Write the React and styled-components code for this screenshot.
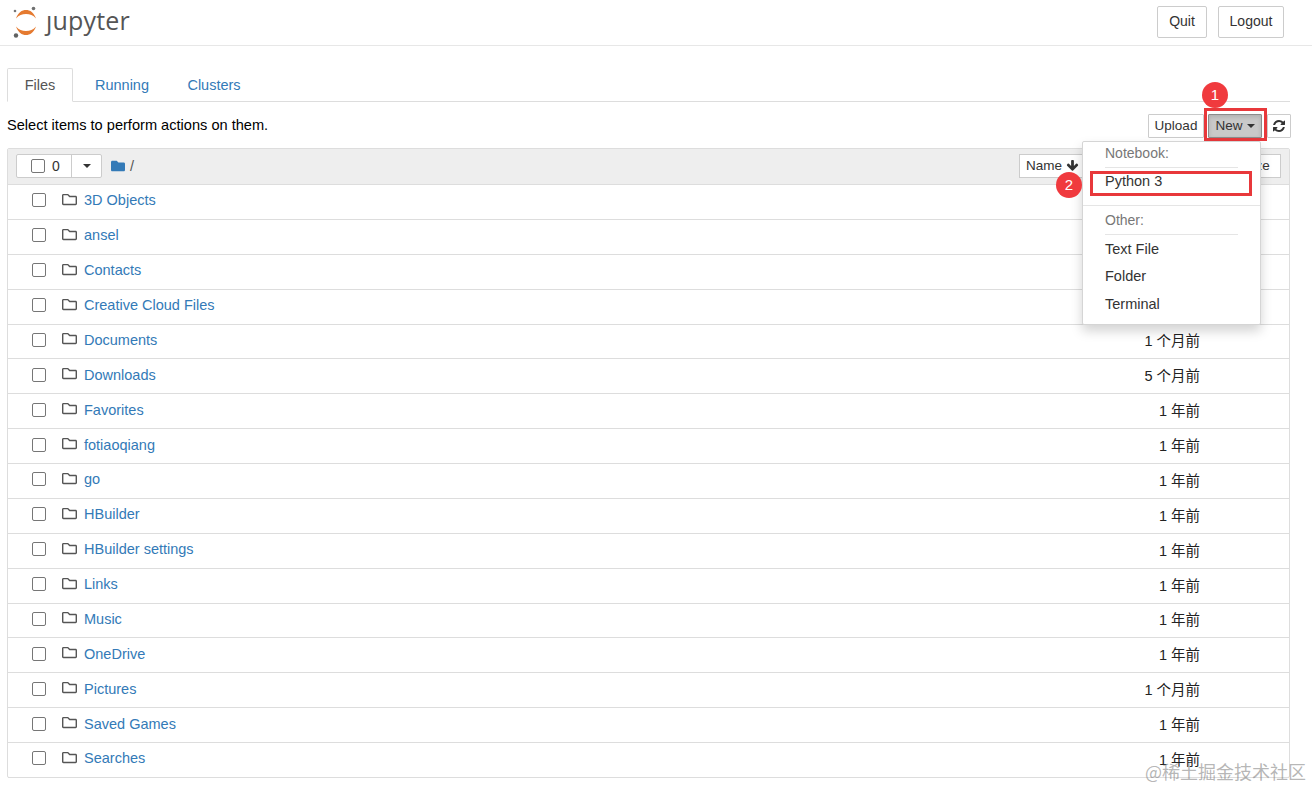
import React from 'react';
import styled, { createGlobalStyle } from 'styled-components';
import { FaRegFolder, FaFolder, FaArrowDown } from 'react-icons/fa';

const GlobalStyle = createGlobalStyle`
    html, body {
        margin: 0;
        padding: 0;
        background: #fff;
        font-family: "Liberation Sans", "Noto Sans CJK SC", sans-serif;
        font-size: 14.5px;
        color: #000;
    }
`

// STYLES
const Page = styled.div`
    position: relative;
    width: 1312px;
    height: 788px;
    overflow: hidden;
`
const Header = styled.header`
    display: flex;
    justify-content: space-between;
    align-items: flex-start;
    box-sizing: border-box;
    height: 46px;
    padding: 6px 28px 0 13px;
    border-bottom: 1px solid #e7e7e7;
`
const Logo = styled.div`
    display: flex;
    align-items: flex-start;
    gap: 7px;
    margin-top: -6px;
`
const LogoText = styled.span`
    font-family: "Open Sans", sans-serif;
    font-size: 25px;
    line-height: 41px;
    letter-spacing: 0.2px;
    color: #555;
`
const HeaderActions = styled.div`
    display: flex;
    gap: 11px;
`
const HeaderButton = styled.button`
    box-sizing: border-box;
    height: 32px;
    width: ${props => props.$width}px;
    padding: 0 0 2px;
    background: #fff;
    border: 1px solid #ccc;
    border-radius: 2px;
    font: inherit;
    font-size: 14px;
    color: #333;
`
const Main = styled.main`
    width: 1283px;
    margin-left: 7px;
`
const TabStrip = styled.nav`
    display: flex;
    box-sizing: border-box;
    height: 34px;
    margin-top: 22px;
    border-bottom: 1px solid #ddd;
`
const Tab = styled.a`
    box-sizing: border-box;
    height: 34px;
    width: ${props => props.$width}px;
    margin-right: ${props => props.$gap}px;
    text-align: center;
    line-height: 33px;
    color: ${props => (props.$active ? '#555' : '#337ab7')};
    background: ${props => (props.$active ? '#fff' : 'transparent')};
    border: 1px solid ${props => (props.$active ? '#ddd' : 'transparent')};
    border-bottom-color: ${props => (props.$active ? '#fff' : 'transparent')};
    border-radius: 2px 2px 0 0;
`
const Toolbar = styled.div`
    display: flex;
    justify-content: space-between;
    align-items: center;
    height: 46px;
    margin-right: -1px;
`
const ToolbarText = styled.span`
    font-size: 14.6px;
`
const ToolbarActions = styled.div`
    display: flex;
    align-items: center;
    margin-top: 2px;
`
const SmallButton = styled.button`
    display: flex;
    align-items: center;
    justify-content: center;
    box-sizing: border-box;
    height: 24px;
    width: ${props => props.$width}px;
    padding: 0 0 1px;
    background: #fff;
    border: 1px solid #ccc;
    border-radius: 1px;
    font: inherit;
    font-size: 13.5px;
    color: #333;
`
const NewWrap = styled.div`
    position: relative;
    margin: 0 5px 0 4px;
`
const NewButton = styled(SmallButton)`
    background: #c9c9c9;
    border-color: #8c8c8c;
    box-shadow: inset 0 2px 4px rgba(0, 0, 0, 0.125);
    gap: 4px;
`
const Caret = styled.span`
    display: inline-block;
    width: 0;
    height: 0;
    border-top: 4px solid #333;
    border-left: 4px solid transparent;
    border-right: 4px solid transparent;
`
const RedBox = styled.div`
    position: absolute;
    box-sizing: border-box;
    border: 3px solid #e8383b;
    pointer-events: none;
`
const NewMark = styled(RedBox)`
    left: -4px;
    top: -6px;
    width: 63px;
    height: 33px;
`
const PythonMark = styled(RedBox)`
    left: 7px;
    top: 3px;
    width: 162px;
    height: 25px;
`
const Badge = styled.span`
    position: absolute;
    width: 26px;
    height: 26px;
    border-radius: 50%;
    background: #f03a3e;
    color: #fff;
    font-size: 15px;
    line-height: 26px;
    text-align: center;
`
const NewBadge = styled(Badge)`
    left: -6px;
    top: -32px;
`
const PythonBadge = styled(Badge)`
    left: -27px;
    top: 4px;
`
const Menu = styled.div`
    position: absolute;
    z-index: 3;
    left: -126px;
    top: 27px;
    box-sizing: border-box;
    width: 179px;
    height: 184px;
    padding-top: 1px;
    background: #fff;
    border: 1px solid #d5d5d5;
    border-radius: 2px;
    box-shadow: 0 6px 12px rgba(0, 0, 0, 0.175);
`
const MenuLabel = styled.div`
    box-sizing: border-box;
    height: ${props => props.$height}px;
    margin: 0 22px;
    padding-top: ${props => props.$top}px;
    color: #777;
    border-bottom: 1px solid #e5e5e5;
    font-size: 14px;
    line-height: 20px;
`
const MenuItem = styled.div`
    position: relative;
    box-sizing: border-box;
    height: ${props => props.$height}px;
    padding-left: 22px;
    line-height: ${props => props.$height}px;
    color: #333;
`
const PythonItem = styled(MenuItem)`
    line-height: 27px;
`
const MenuDivider = styled.div`
    height: 1px;
    margin-top: 8px;
    background: #e5e5e5;
`
const ListPanel = styled.section`
    box-sizing: border-box;
    height: 630px;
    border: 1px solid #ddd;
    border-radius: 2px;
`
const ListHeader = styled.div`
    display: flex;
    align-items: center;
    box-sizing: border-box;
    height: 36px;
    padding: 0 8px 1px;
    background: #eee;
    border-bottom: 1px solid #ddd;
`
const SelectGroup = styled.div`
    display: flex;
    box-sizing: border-box;
    height: 24px;
    background: #fff;
    border: 1px solid #ccc;
    border-radius: 2px;
`
const SelectCount = styled.div`
    display: flex;
    align-items: center;
    gap: 7px;
    box-sizing: border-box;
    width: 55px;
    padding-left: 14px;
    border-right: 1px solid #ccc;
    font-size: 14px;
    color: #333;
`
const SelectCaret = styled.div`
    display: flex;
    align-items: center;
    justify-content: center;
    width: 29px;
`
const Check = styled.span`
    display: block;
    flex: none;
    box-sizing: border-box;
    width: 14px;
    height: 14px;
    background: #fff;
    border: 1px solid #767676;
    border-radius: 2px;
`
const Breadcrumb = styled.div`
    display: flex;
    align-items: center;
    gap: 5px;
    margin-left: 9px;
    color: #337ab7;

    span {
        color: #555;
    }
`
const SortButtons = styled.div`
    display: flex;
    margin-left: auto;
`
const SortButton = styled.div`
    display: flex;
    align-items: center;
    justify-content: center;
    box-sizing: border-box;
    height: 24px;
    width: ${props => props.$width}px;
    margin-left: -1px;
    padding-bottom: 1px;
    background: #fff;
    border: 1px solid #ccc;
    font-size: 13.5px;
    color: #333;
`
const NameButton = styled(SortButton)`
    justify-content: flex-start;
    gap: 4px;
    padding-left: 6px;
`
const Rows = styled.div`
    display: grid;
    grid-template-rows: repeat(17, 34.88px);
`
const Row = styled.div`
    display: flex;
    align-items: center;
    box-sizing: border-box;
    padding: 0 89px 3px 24px;
    border-bottom: 1px solid #ddd;
`
const RowIcon = styled.span`
    display: flex;
    margin-left: 16px;
    margin-right: 7px;
    margin-top: -2px;
    color: #555;
    font-size: 15px;
`
const RowLink = styled.a`
    color: #337ab7;
`
const RowDate = styled.span`
    margin-left: auto;
    color: #222;
`
const Watermark = styled.div`
    position: absolute;
    z-index: 4;
    right: 6px;
    top: 759px;
    font-family: "Noto Sans CJK SC", sans-serif;
    font-size: 18px;
    line-height: 24px;
    color: rgba(120, 120, 120, 0.55);
`

const FILES = [
    ['3D Objects', '1 年前'],
    ['ansel', '1 年前'],
    ['Contacts', '1 年前'],
    ['Creative Cloud Files', '1 年前'],
    ['Documents', '1 个月前'],
    ['Downloads', '5 个月前'],
    ['Favorites', '1 年前'],
    ['fotiaoqiang', '1 年前'],
    ['go', '1 年前'],
    ['HBuilder', '1 年前'],
    ['HBuilder settings', '1 年前'],
    ['Links', '1 年前'],
    ['Music', '1 年前'],
    ['OneDrive', '1 年前'],
    ['Pictures', '1 个月前'],
    ['Saved Games', '1 年前'],
    ['Searches', '1 年前'],
];

const JupyterMark = () => (
    <svg width="26" height="34" viewBox="0 0 26 34" style={{ marginTop: 5 }}>
        <path d="M3 13.500C5 7.500 9 5 13 5s8 2.500 10 8.500C20 10 17 9 13 9s-7 1-10 4.500z" fill="#e57a30" />
        <path d="M3 21.500C5 27.500 9 30 13 30s8-2.500 10-8.500C20 25 17 26 13 26s-7-1-10-4.500z" fill="#e57a30" />
        <circle cx="20.500" cy="3.500" r="1.800" fill="#6f7070" />
        <circle cx="2" cy="6" r="1.300" fill="#767677" />
        <circle cx="3" cy="30.500" r="2.200" fill="#616262" />
    </svg>
);

const RefreshIcon = () => (
    <svg width="14" height="14" viewBox="0 0 1792 1792" fill="#333">
        <path d="M1639 1056q0 5-1 7-64 268-268 434.500t-478 166.500q-146 0-282.500-55t-243.500-157l-129 129q-19 19-45 19t-45-19-19-45v-448q0-26 19-45t45-19h448q26 0 45 19t19 45-19 45l-137 137q71 66 161 102t187 36q134 0 250-65t186-179q11-17 53-117 8-23 30-23h192q13 0 22.500 9.500t9.500 22.500zm25-800v448q0 26-19 45t-45 19h-448q-26 0-45-19t-19-45 19-45l138-138q-148-137-349-137-134 0-250 65t-186 179q-11 17-53 117-8 23-30 23h-199q-13 0-22.500-9.500t-9.500-22.500v-7q65-268 270-434.500t480-166.500q146 0 284 55.500t245 156.500l130-129q19-19 45-19t45 19 19 45z" />
    </svg>
);

const HeavyArrowDown = () => (
    <svg width="13" height="13" viewBox="0 0 1792 1792" fill="#333">
        <path d="M1675 832q0 53-37 90l-651 652q-39 37-91 37-53 0-90-37l-651-652q-38-36-38-90 0-53 38-91l74-75q39-37 91-37 53 0 90 37l294 294v-704q0-52 38-90t90-38h128q52 0 90 38t38 90v704l294-294q37-37 90-37 52 0 91 37l75 75q37 39 37 91z" />
    </svg>
);

export default function App() {
    return (
        <Page>
            <GlobalStyle />
            <Header>
                <Logo>
                    <JupyterMark />
                    <LogoText>ȷupyter</LogoText>
                </Logo>
                <HeaderActions>
                    <HeaderButton $width={50}>Quit</HeaderButton>
                    <HeaderButton $width={66}>Logout</HeaderButton>
                </HeaderActions>
            </Header>
            <Main>
                <TabStrip>
                    <Tab $active $width={66} $gap={4}>Files</Tab>
                    <Tab $width={90} $gap={2}>Running</Tab>
                    <Tab $width={90} $gap={0}>Clusters</Tab>
                </TabStrip>
                <Toolbar>
                    <ToolbarText>Select items to perform actions on them.</ToolbarText>
                    <ToolbarActions>
                        <SmallButton $width={56}>Upload</SmallButton>
                        <NewWrap>
                            <NewButton $width={54}>New <Caret /></NewButton>
                            <NewMark />
                            <NewBadge>1</NewBadge>
                            <Menu>
                                <MenuLabel $height={25} $top={0}>Notebook:</MenuLabel>
                                <PythonItem $height={29}>
                                    Python 3
                                    <PythonMark />
                                    <PythonBadge>2</PythonBadge>
                                </PythonItem>
                                <MenuDivider />
                                <MenuLabel $height={29} $top={4}>Other:</MenuLabel>
                                <MenuItem $height={28}>Text File</MenuItem>
                                <MenuItem $height={27}>Folder</MenuItem>
                                <MenuItem $height={28}>Terminal</MenuItem>
                            </Menu>
                        </NewWrap>
                        <SmallButton $width={24}><RefreshIcon /></SmallButton>
                    </ToolbarActions>
                </Toolbar>
                <ListPanel>
                    <ListHeader>
                        <SelectGroup>
                            <SelectCount><Check /> 0</SelectCount>
                            <SelectCaret><Caret /></SelectCaret>
                        </SelectGroup>
                        <Breadcrumb><FaFolder size={14} /><span>/</span></Breadcrumb>
                        <SortButtons>
                            <NameButton $width={72}>Name <HeavyArrowDown /></NameButton>
                            <SortButton $width={120}>Last Modified</SortButton>
                            <SortButton $width={72}>File size</SortButton>
                        </SortButtons>
                    </ListHeader>
                    <Rows>
                        {FILES.map(([name, date]) => (
                            <Row key={name}>
                                <Check />
                                <RowIcon><FaRegFolder /></RowIcon>
                                <RowLink>{name}</RowLink>
                                <RowDate>{date}</RowDate>
                            </Row>
                        ))}
                    </Rows>
                </ListPanel>
            </Main>
            <Watermark>@稀土掘金技术社区</Watermark>
        </Page>
    );
}
